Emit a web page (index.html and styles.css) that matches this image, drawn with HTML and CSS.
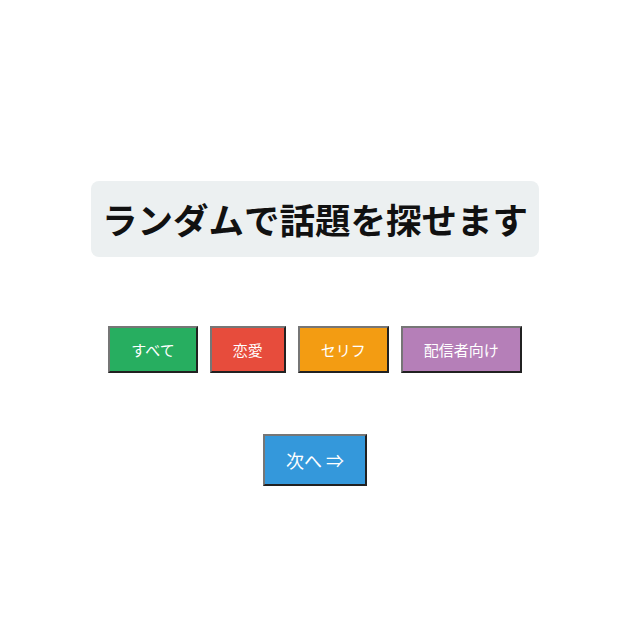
FILE: index.html
```html
<!DOCTYPE html>
<html lang="ja">

<head>
    <meta charset="UTF-8">
    <meta name="viewport" content="width=device-width, initial-scale=1.0">
    <title>話題ガチャ</title>
    <link rel="stylesheet" href="styles.css">
</head>

<body>

    <div class="container">
        <h1 id="topic">ランダムで話題を探せます</h1>

        <div class="genres">
            <button class="genre all">すべて</button>
            <button class="genre love">恋愛</button>
            <button class="genre line">セリフ</button>
            <button class="genre stream">配信者向け</button>
        </div>

        <button id="next-btn">次へ ⇒</button>
    </div>

</body>

</html>
```

FILE: styles.css
```css
body {
    margin: 0;
    font-family: "Noto Sans CJK JP", "Noto Sans", sans-serif;
}

.container {
    display: flex;
    flex-direction: column;
    align-items: center;
    padding-left: 10px;
    padding-top: 181px;
}

#topic {
    margin: 0;
    padding: 12px 11px;
    font-size: 35.5px;
    line-height: 52px;
    font-weight: bold;
    color: #111;
    background-color: #ecf0f1;
    border-radius: 8px;
}

.genres {
    display: flex;
    gap: 12px;
    margin-top: 69px;
}

.genre,
#next-btn {
    font-family: inherit;
    color: white;
    border: 2px outset #767676;
    cursor: pointer;
}

.genre {
    padding: 12px 21px;
    font-size: 15px;
    line-height: 19px;
}

.all {
    background-color: #27ae60;
}

.love {
    background-color: #e74c3c;
}

.line {
    background-color: #f39c12;
}

.stream {
    background-color: #b57fb8;
}

#next-btn {
    margin-top: 61px;
    padding: 12px 21px;
    font-size: 18px;
    line-height: 24px;
    background-color: #3498db;
}
```
